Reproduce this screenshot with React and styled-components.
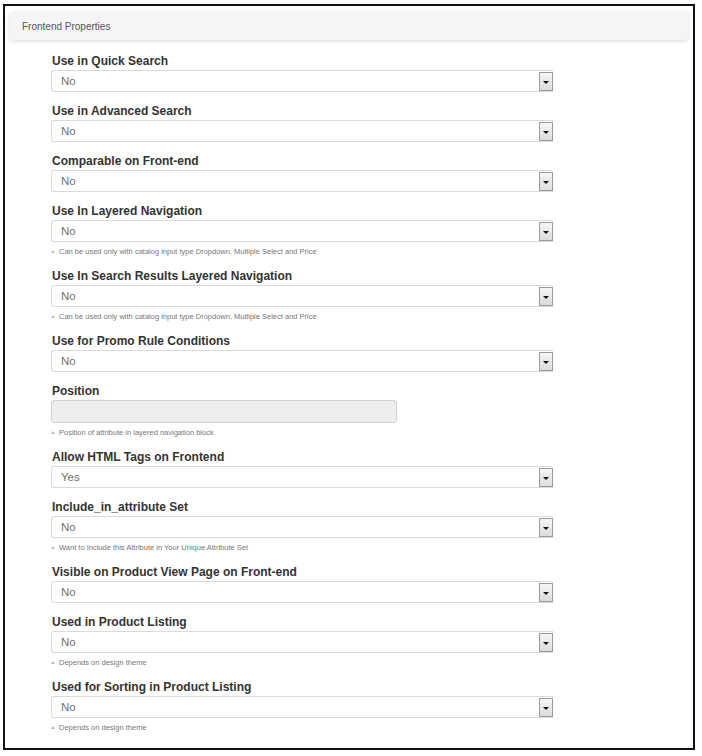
import React from 'react';
import styled, { createGlobalStyle } from 'styled-components';

const GlobalStyle = createGlobalStyle`
  html, body {
    margin: 0;
    padding: 0;
    background: #fff;
  }
  body {
    font-family: "Liberation Sans", Arial, sans-serif;
  }
`;

const Frame = styled.div`
  box-sizing: border-box;
  width: 692px;
  height: 746px;
  margin: 4px 0 0 3px;
  border: 2px solid #111;
  padding: 6px 5px 0 5px;
  background: #fff;
`;

const Header = styled.div`
  height: 28px;
  display: flex;
  align-items: center;
  padding-left: 12px;
  background: #f5f5f5;
  border-radius: 3px;
  box-shadow: 0 1px 4px rgba(0, 0, 0, 0.16);
  font-size: 10px;
  color: #555;
`;

const FormBody = styled.div`
  padding: 14px 0 0 41px;
  display: flex;
  flex-direction: column;
`;

const Field = styled.div`
  display: flex;
  flex-direction: column;
  margin-bottom: 12px;
`;

const Label = styled.div`
  font-size: 12px;
  line-height: 14px;
  font-weight: bold;
  color: #333;
  padding-left: 1px;
  margin-bottom: 2px;
`;

const SelectBox = styled.div`
  box-sizing: border-box;
  width: 502px;
  height: 22px;
  display: flex;
  align-items: stretch;
  border: 1px solid #dadada;
  border-right: none;
  border-radius: 3px 0 0 3px;
  background: #fff;
`;

const Value = styled.span`
  flex: 1;
  display: flex;
  align-items: center;
  padding-left: 9px;
  font-size: 11.5px;
  color: #707070;
`;

const ArrowButton = styled.span`
  box-sizing: border-box;
  width: 14px;
  margin-top: 1px;
  display: flex;
  align-items: center;
  justify-content: center;
  border: 1px solid #9a9a9a;
  background: linear-gradient(#f6f6f6, #dcdcdc);

  &::after {
    content: "";
    margin-top: 2px;
    border-left: 3px solid transparent;
    border-right: 3px solid transparent;
    border-top: 3px solid #111;
  }
`;

const TextInput = styled.div`
  box-sizing: border-box;
  width: 346px;
  height: 23px;
  border: 1px solid #d2d2d2;
  border-radius: 3px;
  background: #eee;
`;

const Hint = styled.div`
  margin-top: 4px;
  font-size: 7.5px;
  line-height: 11px;
  color: #777;
  display: flex;
  align-items: center;
  gap: 4px;

  &::before {
    content: "";
    border-left: 2px solid transparent;
    border-right: 2px solid transparent;
    border-bottom: 3px solid #bbb;
  }
`;

const LAYERED = 'Can be used only with catalog input type Dropdown, Multiple Select and Price';
const THEME = 'Depends on design theme';

const fields = [
  { label: 'Use in Quick Search', value: 'No' },
  { label: 'Use in Advanced Search', value: 'No' },
  { label: 'Comparable on Front-end', value: 'No' },
  { label: 'Use In Layered Navigation', value: 'No', hint: LAYERED },
  { label: 'Use In Search Results Layered Navigation', value: 'No', hint: LAYERED },
  { label: 'Use for Promo Rule Conditions', value: 'No' },
  { label: 'Position', input: true, hint: 'Position of attribute in layered navigation block' },
  { label: 'Allow HTML Tags on Frontend', value: 'Yes' },
  { label: 'Include_in_attribute Set', value: 'No', hint: 'Want to Include this Attribute in Your Unique Attribute Set' },
  { label: 'Visible on Product View Page on Front-end', value: 'No' },
  { label: 'Used in Product Listing', value: 'No', hint: THEME },
  { label: 'Used for Sorting in Product Listing', value: 'No', hint: THEME },
];

const App = () => {
  return (
    <>
      <GlobalStyle />
      <Frame>
        <Header>Frontend Properties</Header>
        <FormBody>
          {fields.map((f) => (
            <Field key={f.label}>
              <Label>{f.label}</Label>
              {f.input ? (
                <TextInput />
              ) : (
                <SelectBox>
                  <Value>{f.value}</Value>
                  <ArrowButton />
                </SelectBox>
              )}
              {f.hint && <Hint>{f.hint}</Hint>}
            </Field>
          ))}
        </FormBody>
      </Frame>
    </>
  );
};

export default App;
